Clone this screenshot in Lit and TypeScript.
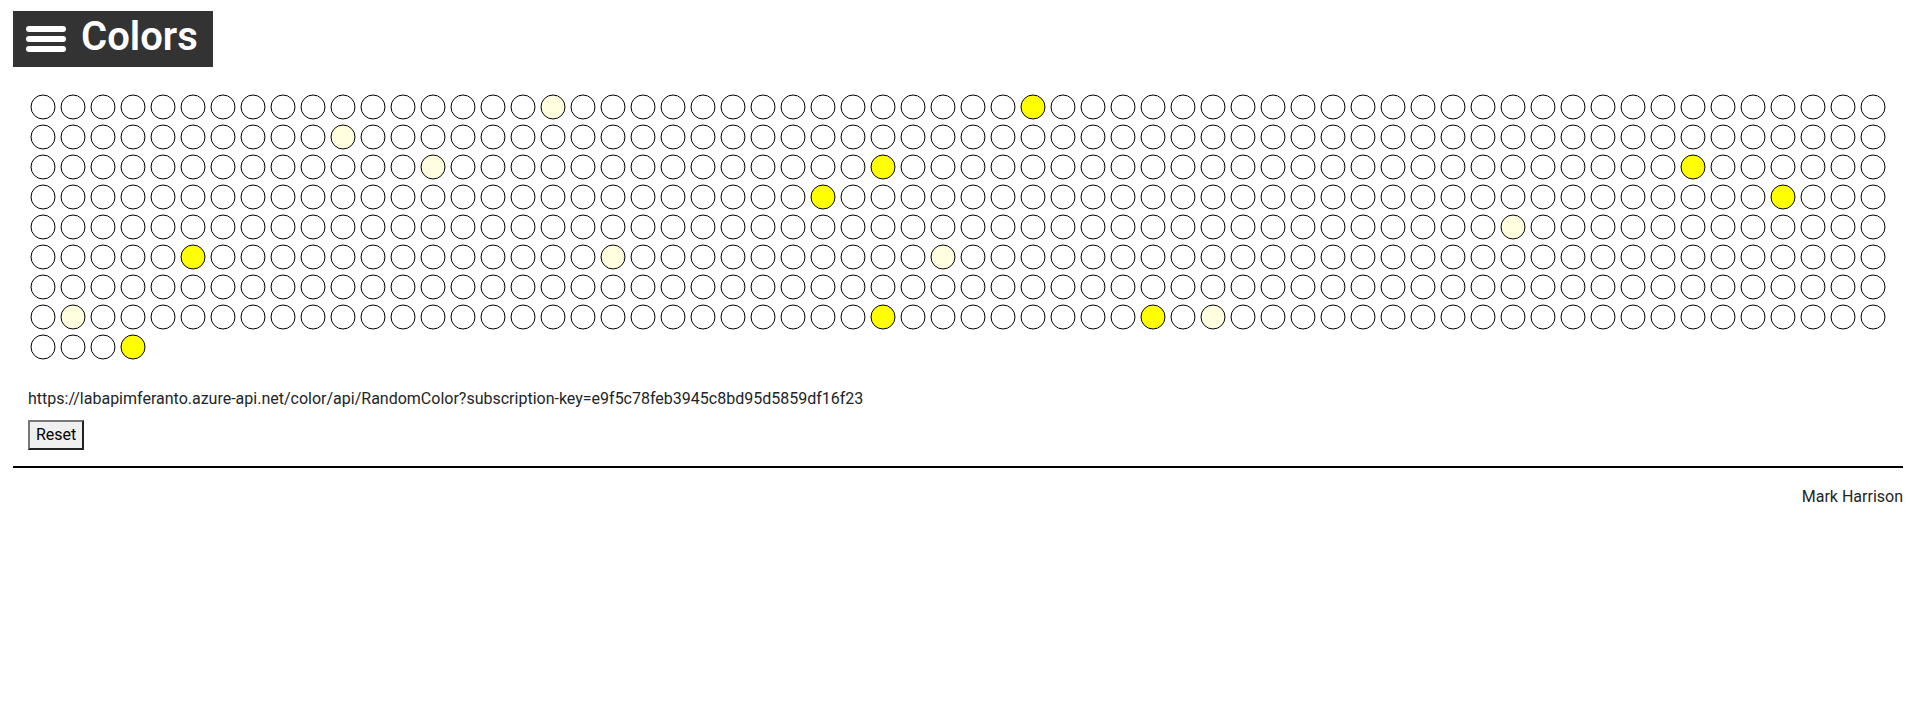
import { LitElement, html, css } from "lit";
import { customElement, state } from "lit/decorators.js";

const LIGHT_COUNT = 500;

const INITIAL_COLORS: Record<number, string> = {
  17: "lightyellow",
  33: "yellow",
  72: "lightyellow",
  137: "lightyellow",
  152: "yellow",
  179: "yellow",
  212: "yellow",
  244: "yellow",
  297: "lightyellow",
  315: "yellow",
  329: "lightyellow",
  340: "lightyellow",
  435: "lightyellow",
  462: "yellow",
  471: "yellow",
  473: "lightyellow",
  499: "yellow",
};

@customElement("color-light")
export class ColorLight extends LitElement {
  static properties = { color: { type: String } };
  declare color: string;

  static styles = css`
    :host {
      display: block;
      width: 30px;
      height: 30px;
    }
    .light {
      display: block;
      width: 100%;
      height: 100%;
    }
    .disc {
      stroke: #000;
      stroke-width: 1px;
    }
    .white {
      fill: #fff;
    }
    .yellow {
      fill: #ff0;
    }
    .lightyellow {
      fill: #ffffe0;
    }
  `;

  render() {
    return html`<svg class="light" viewBox="0 0 30 30" aria-hidden="true">
      <circle class="disc ${this.color}" cx="15" cy="15" r="12" />
    </svg>`;
  }
}

@customElement("app-root")
export class AppRoot extends LitElement {
  @state() private colors: Record<number, string> = INITIAL_COLORS;

  static styles = css`
    :host {
      display: block;
      padding: 11px 9px 16px 13px;
      background: #fff;
      color: #212529;
      font: 16px/24px Roboto, "Liberation Sans", sans-serif;
    }
    .header {
      display: flex;
    }
    .brand {
      display: flex;
      align-items: center;
      gap: 15px;
      box-sizing: border-box;
      height: 56px;
      padding: 0 15px 0 13px;
      background: #333;
      color: #fff;
    }
    .menu {
      display: grid;
      gap: 4px;
      width: 40px;
      padding: 0;
      border: 0;
      background: none;
      cursor: pointer;
    }
    .bar {
      height: 6px;
      border-radius: 3px;
      background: #fff;
    }
    .title {
      margin: 0;
      padding-bottom: 4px;
      font-size: 40px;
      line-height: 48px;
      font-weight: 600;
    }
    .content {
      padding: 25px 15px 16px;
    }
    .lights {
      display: flex;
      flex-wrap: wrap;
    }
    .url {
      margin: 25px 0 9px;
      overflow-wrap: anywhere;
    }
    .reset {
      display: block;
      height: 30px;
      padding: 0 6px;
      border: 2px solid;
      border-color: #767676 #212121 #212121 #767676;
      border-radius: 0;
      background: #efefef;
      color: #000;
      font: inherit;
    }
    .rule {
      margin: 0;
      border: 0;
      border-top: 2px solid #000;
    }
    .footer {
      margin-top: 17px;
      text-align: right;
    }
  `;

  private reset() {
    this.colors = {};
  }

  render() {
    return html`
      <header class="header">
        <div class="brand">
          <button class="menu" type="button" aria-label="Menu">
            <span class="bar"></span><span class="bar"></span><span class="bar"></span>
          </button>
          <h1 class="title">Colors</h1>
        </div>
      </header>
      <main class="content">
        <div class="lights">
          ${Array.from(
            { length: LIGHT_COUNT },
            (_, i) => html`<color-light color=${this.colors[i] ?? "white"}></color-light>`
          )}
        </div>
        <p class="url">https://labapimferanto.azure-api.net/color/api/RandomColor?subscription-key=e9f5c78feb3945c8bd95d5859df16f23</p>
        <button class="reset" type="button" @click=${this.reset}>Reset</button>
      </main>
      <hr class="rule" />
      <footer class="footer">Mark Harrison</footer>
    `;
  }
}
